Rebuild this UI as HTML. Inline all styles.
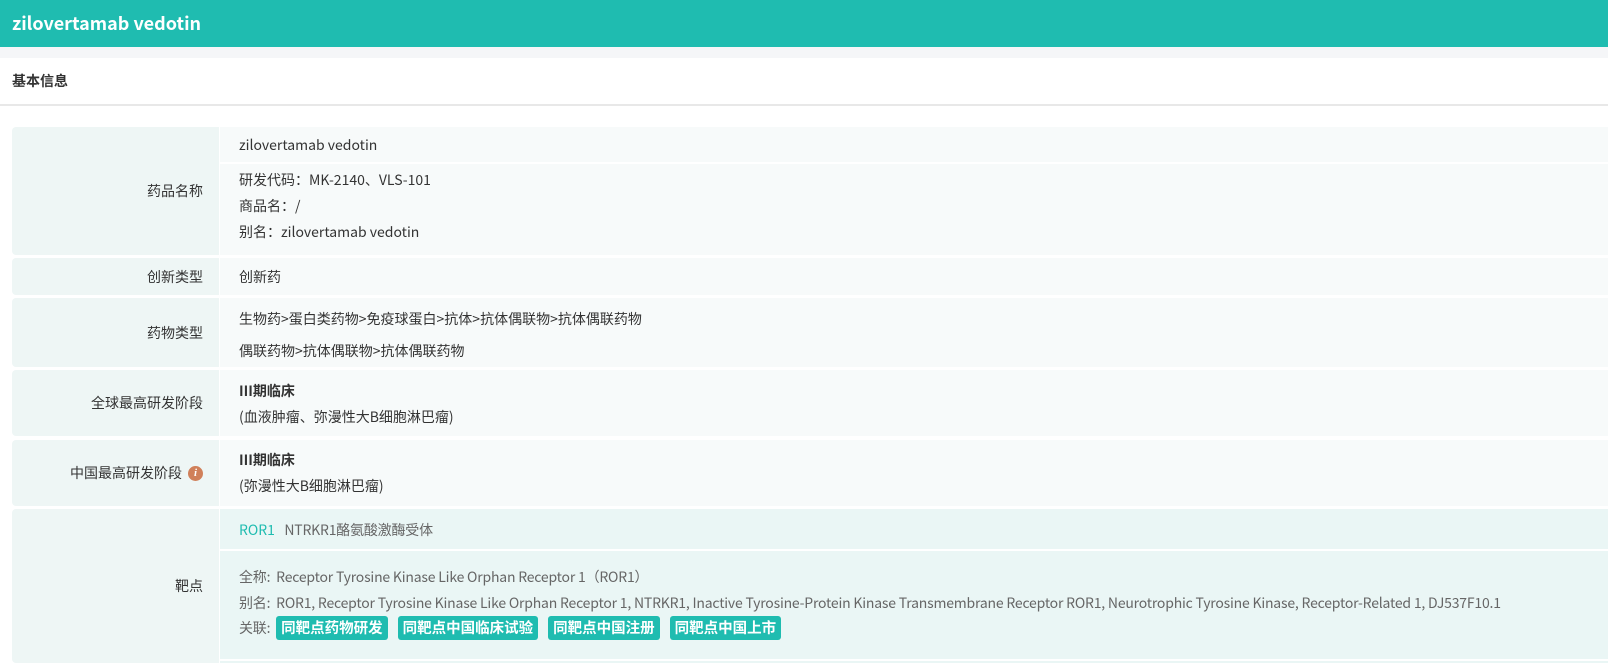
<!DOCTYPE html>
<html><head><meta charset="utf-8"><style>
*{margin:0;padding:0;box-sizing:border-box}
body{width:1608px;height:663px;overflow:hidden;background:#f5f6f8;font-family:"Noto Sans CJK SC","Liberation Sans",sans-serif;font-size:14px;color:#333}
.hdr{height:47px;background:#1fbcb0;color:#fff;font-weight:bold;font-size:18px;line-height:46px;padding-left:12px}
.card{position:absolute;top:58px;left:0;width:1608px;height:605px;background:#fff}
.ttl{height:48px;border-bottom:2px solid #e8e8e8;font-weight:bold;font-size:14px;line-height:46px;padding-left:12px}
.row{position:absolute;left:12px;width:1596px;display:flex}
.lab{width:207px;background:#eef6f5;text-align:right;padding-right:16px;display:flex;align-items:center;justify-content:flex-end;border-radius:4px 0 0 4px}
.val{flex:1;background:#f7fafa;margin-left:1px;position:relative}
.val div{position:absolute;left:19px;white-space:nowrap;line-height:20px}
.tag{display:inline-block;background:#1fbcb0;color:#fff;font-weight:bold;font-size:14.5px;border-radius:3px;padding:0 5px;height:24px;line-height:24px;margin-right:10px;letter-spacing:0}
.g{color:#666;letter-spacing:-0.2px}
</style></head><body>
<div class="hdr">zilovertamab vedotin</div>
<div class="card"><div class="ttl">基本信息</div></div>

<div class="row" style="top:127px;height:128px"><div class="lab">药品名称</div><div class="val">
<div style="top:0;left:0;right:0;height:37px;border-bottom:2px solid #fff;line-height:36px;padding-left:19px">zilovertamab vedotin</div>
<div style="top:43px">研发代码：MK-2140、VLS-101</div>
<div style="top:69px">商品名：/</div>
<div style="top:95px">别名：zilovertamab vedotin</div></div></div>

<div class="row" style="top:258px;height:37px"><div class="lab">创新类型</div><div class="val"><div style="top:9px">创新药</div></div></div>

<div class="row" style="top:298px;height:69px"><div class="lab">药物类型</div><div class="val"><div style="top:11px">生物药&gt;蛋白类药物&gt;免疫球蛋白&gt;抗体&gt;抗体偶联物&gt;抗体偶联药物</div><div style="top:43px">偶联药物&gt;抗体偶联物&gt;抗体偶联药物</div></div></div>

<div class="row" style="top:370px;height:66px"><div class="lab">全球最高研发阶段</div><div class="val"><div style="top:11px;font-weight:bold">III期临床</div><div style="top:37px">(血液肿瘤、弥漫性大B细胞淋巴瘤)</div></div></div>

<div class="row" style="top:440px;height:66px"><div class="lab">中国最高研发阶段<span style="display:inline-block;width:15px;height:15px;border-radius:50%;background:#d0805a;color:#fff;font-size:11px;font-style:italic;font-weight:bold;line-height:15px;text-align:center;margin-left:6px;font-family:'Liberation Serif',serif">i</span></div><div class="val"><div style="top:10px;font-weight:bold">III期临床</div><div style="top:36px">(弥漫性大B细胞淋巴瘤)</div></div></div>

<div class="row" style="top:509px;height:154px"><div class="lab">靶点</div><div class="val" style="background:#eaf6f5">
<div style="top:0;left:0;right:0;height:42px;border-bottom:2px solid #fff;line-height:42px;padding-left:19px"><span style="color:#1fbcb0">ROR1</span>&nbsp;&nbsp; <span class="g">NTRKR1酪氨酸激酶受体</span></div>
<div class="g" style="top:58px">全称:&nbsp; Receptor Tyrosine Kinase Like Orphan Receptor 1（ROR1）</div>
<div class="g" style="top:84px">别名:&nbsp; ROR1, Receptor Tyrosine Kinase Like Orphan Receptor 1, NTRKR1, Inactive Tyrosine-Protein Kinase Transmembrane Receptor ROR1, Neurotrophic Tyrosine Kinase, Receptor-Related 1, DJ537F10.1</div>
<div class="g" style="top:107px;line-height:24px">关联:&nbsp; <span class="tag">同靶点药物研发</span><span class="tag">同靶点中国临床试验</span><span class="tag">同靶点中国注册</span><span class="tag">同靶点中国上市</span></div>
<div style="top:150px;left:0;right:0;height:2px;background:#fff"></div>
</div></div>
</body></html>
